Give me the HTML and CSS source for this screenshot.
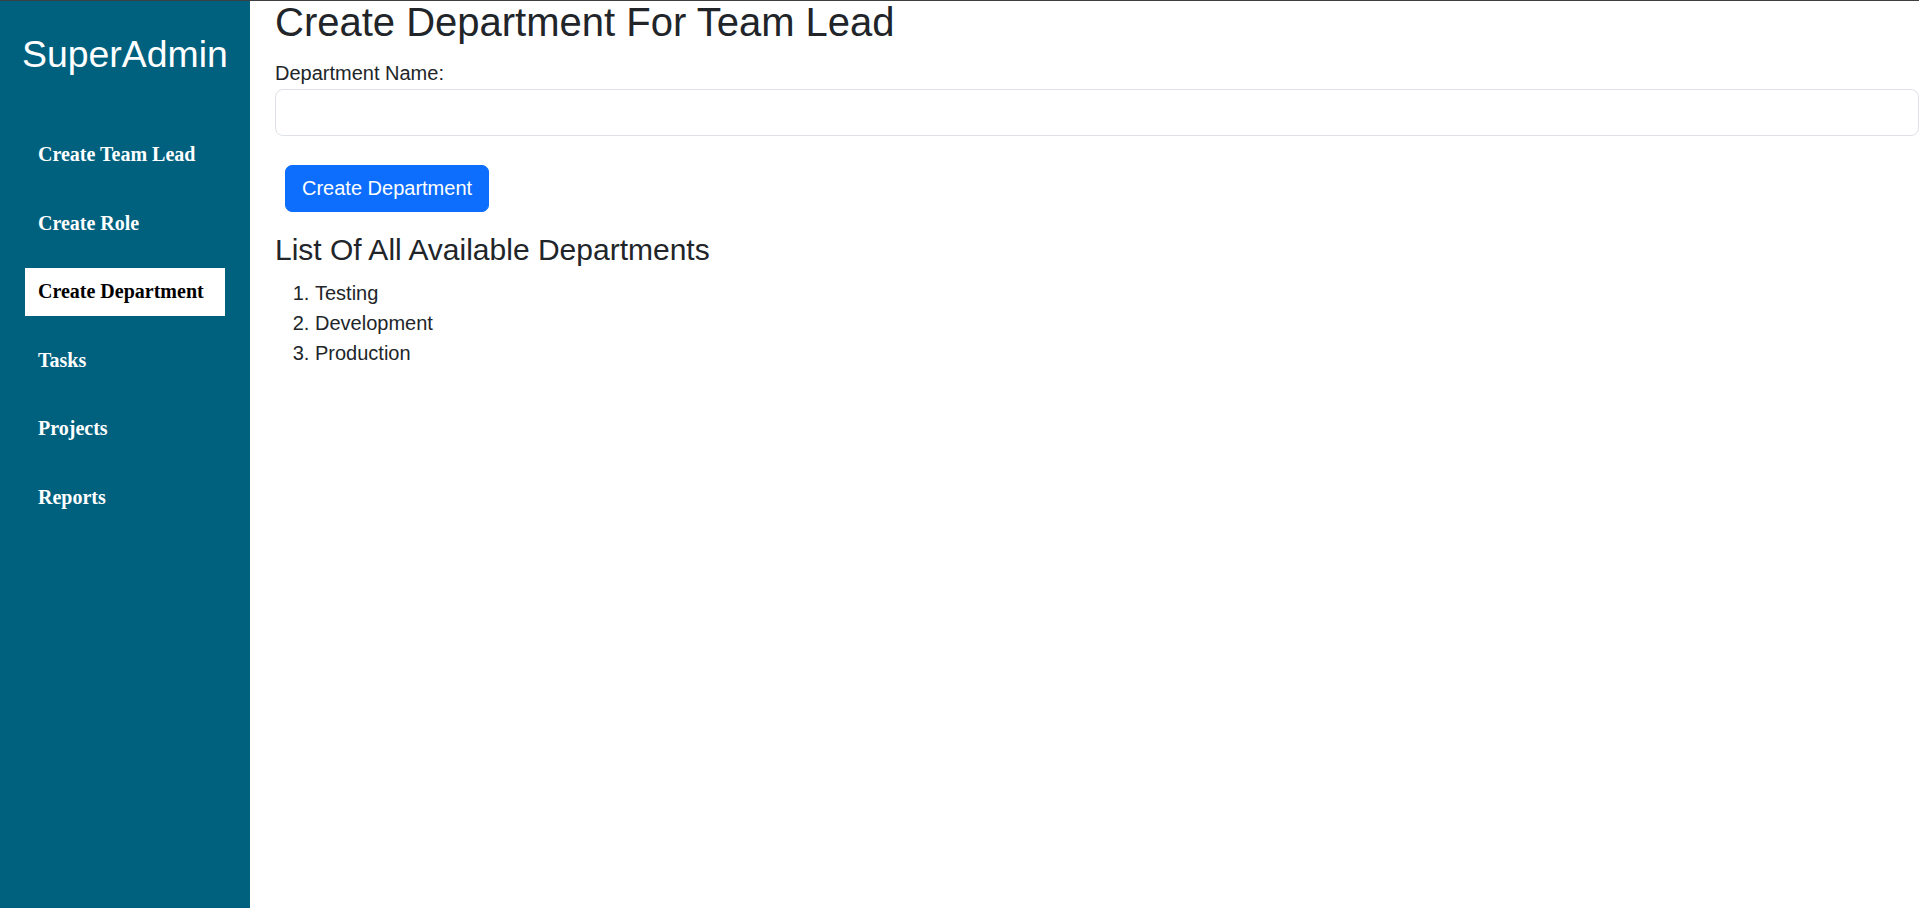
FILE: index.html
```html
<!DOCTYPE html>
<html lang="en">
<head>
<meta charset="utf-8">
<title>SuperAdmin - Create Department</title>
<link rel="stylesheet" href="styles.css">
</head>
<body>
<div class="app">
  <aside class="sidebar">
    <div class="brand">SuperAdmin</div>
    <ul class="nav">
      <li class="nav-item">Create Team Lead</li>
      <li class="nav-item">Create Role</li>
      <li class="nav-item active">Create Department</li>
      <li class="nav-item">Tasks</li>
      <li class="nav-item">Projects</li>
      <li class="nav-item">Reports</li>
    </ul>
  </aside>
  <main class="content">
    <h1 class="page-title">Create Department For Team Lead</h1>
    <form class="dept-form">
      <label class="form-label" for="deptName">Department Name:</label>
      <input class="form-input" id="deptName" type="text">
      <button class="btn-primary" type="button">Create Department</button>
    </form>
    <h3 class="list-title">List Of All Available Departments</h3>
    <ol class="dept-list">
      <li>Testing</li>
      <li>Development</li>
      <li>Production</li>
    </ol>
  </main>
</div>
</body>
</html>
```

FILE: styles.css
```css
* { box-sizing: border-box; }

html, body {
  margin: 0;
  padding: 0;
  height: 100%;
}

body {
  font-family: "Liberation Sans", Arial, sans-serif;
  color: #212529;
  background: #fff;
  overflow: hidden;
}

.app {
  display: flex;
  height: 100%;
  border-top: 1px solid #3c4043;
}

.sidebar {
  width: 250px;
  flex: 0 0 250px;
  background: #00617f;
  padding: 31px 20px 0 25px;
}

.brand {
  font-family: "Liberation Sans", Arial, sans-serif;
  font-size: 37.4px;
  line-height: 44px;
  color: #fff;
  margin-left: -3px;
  white-space: nowrap;
}

.nav {
  list-style: none;
  margin: 55px 0 0;
  padding: 0;
  width: 200px;
  display: flex;
  flex-direction: column;
  gap: 20.6px;
}

.nav-item {
  font-family: "Liberation Serif", "Times New Roman", serif;
  font-weight: bold;
  font-size: 20px;
  line-height: 24px;
  height: 48px;
  padding: 11px 13px 13px;
  color: #fff;
  white-space: nowrap;
}

.nav-item.active {
  background: #fff;
  color: #000;
}

.content {
  flex: 1;
  min-width: 0;
  padding-left: 25px;
}

.page-title {
  font-size: 40px;
  font-weight: 400;
  line-height: 42px;
  margin: 0 0 15px;
}

.dept-form {
  display: flex;
  flex-direction: column;
  align-items: flex-start;
}

.form-label {
  font-size: 20px;
  line-height: 30px;
  margin-bottom: 1px;
}

.form-input {
  width: 100%;
  height: 47px;
  padding: 8px 16px;
  font-family: inherit;
  font-size: 20px;
  border: 1px solid #dee2e6;
  border-radius: 8px;
  background: #fff;
  margin: 0;
}

.btn-primary {
  margin: 29px 0 0 10px;
  height: 47px;
  padding: 8px 16px;
  font-family: "Liberation Sans", Arial, sans-serif;
  font-size: 20px;
  line-height: 29px;
  color: #fff;
  background: #0d6efd;
  border: 1px solid #0d6efd;
  border-radius: 7px;
}

.list-title {
  font-size: 30px;
  font-weight: 400;
  line-height: 36px;
  margin: 20px 0 10px;
}

.dept-list {
  margin: 0;
  padding-left: 40px;
  font-size: 20px;
  line-height: 30px;
}
```
